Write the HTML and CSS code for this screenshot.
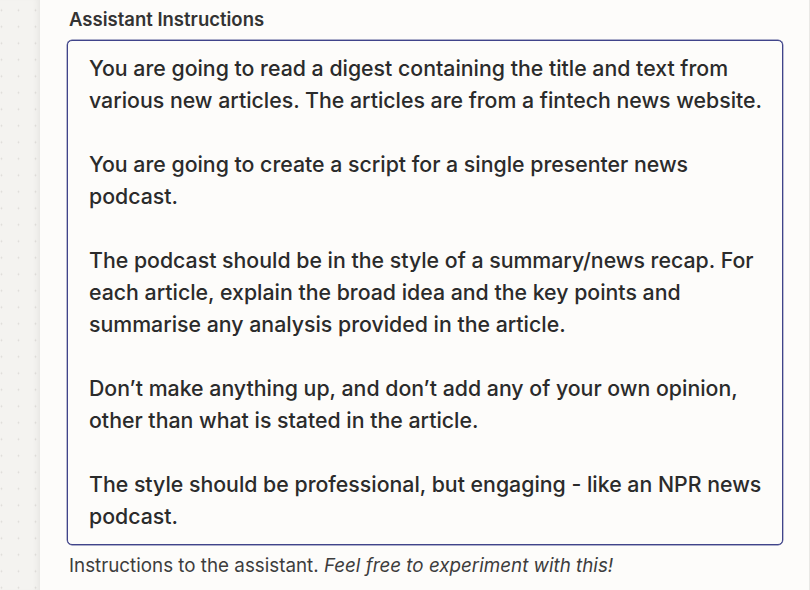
FILE: index.html
```html
<!DOCTYPE html>
<html>
<head>
    <title>Assistant Instructions</title>
    <link rel="stylesheet" href="styles.css">
</head>
<body>
    <div class="layout">
        <div class="canvas"></div>
        <div class="panel">
            <div class="field">
                <label class="field-label" for="instructions">Assistant Instructions</label>
                <div class="field-box" id="instructions">
                    <p>You are going to read a digest containing the title and text from various new articles. The articles are from a fintech news website.</p>
                    <p>You are going to create a script for a single presenter news podcast.</p>
                    <p>The podcast should be in the style of a summary/news recap. For each article, explain the broad idea and the key points and summarise any analysis provided in the article.</p>
                    <p>Don’t make anything up, and don’t add any of your own opinion, other than what is stated in the article.</p>
                    <p>The style should be professional, but engaging - like an NPR news podcast.</p>
                </div>
                <div class="field-help">Instructions to the assistant. <em>Feel free to experiment with this!</em></div>
            </div>
        </div>
    </div>
</body>
</html>
```

FILE: styles.css
```css
body {
    margin: 0;
    font-family: Inter, "Noto Sans", Arial, sans-serif;
    color: #2d2d2d;
    background-color: #fdfcfa;
}

.layout {
    display: flex;
    height: 590px;
    overflow: hidden;
}

.canvas {
    width: 40px;
    flex-shrink: 0;
    background-color: #f4f3f0;
    background-image: radial-gradient(circle, #dcdbd8 0.8px, transparent 1.1px);
    background-size: 17px 16.5px;
    background-position: -7px 2px;
    box-shadow: inset -6px 0 6px -4px rgba(0, 0, 0, 0.06);
}

.panel {
    flex: 1;
    padding: 0 26px 0 27px;
    background-color: #fdfcfa;
    border-right: 1px solid #e9e8e5;
}

.field-label {
    display: block;
    padding-left: 2px;
    font-size: 18.5px;
    font-weight: 600;
    line-height: 24px;
    margin-top: 7px;
    margin-bottom: 9px;
    color: #333;
}

.field-box {
    border: 1px solid #40448a;
    border-radius: 5px;
    box-shadow: 0 0 0 0.4px #5a5e98;
    padding: 11px 9px 12px 21px;
    font-size: 21.3px;
    font-weight: 500;
    line-height: 32px;
    color: #2b2b2b;
    background-color: #fdfcfa;
}

.field-box p {
    margin: 0 0 32px 0;
}

.field-box p:last-child {
    margin-bottom: 0;
}

.field-help {
    margin-top: 9px;
    padding-left: 2px;
    font-size: 18.8px;
    line-height: 24px;
    color: #3d3d3d;
}
```
